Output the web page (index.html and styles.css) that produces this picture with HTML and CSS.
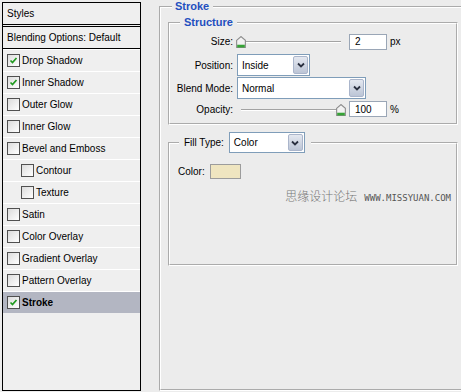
FILE: index.html
```html
<!DOCTYPE html>
<html lang="en">
<head>
  <meta charset="UTF-8">
  <title>Layer Style - Stroke</title>
  <link rel="stylesheet" href="styles.css">
</head>
<body>

  <div class="window">
    <div class="styles-panel">
      <div class="panel-head">Styles</div>
      <div class="panel-blend">Blending Options: Default</div>
      <div class="style-item"><span class="check on"><svg viewBox="0 0 11 11"><path d="M2.5 5.5 L4.5 7.5 L8.5 3" /></svg></span>Drop Shadow</div>
      <div class="style-item"><span class="check on"><svg viewBox="0 0 11 11"><path d="M2.5 5.5 L4.5 7.5 L8.5 3" /></svg></span>Inner Shadow</div>
      <div class="style-item"><span class="check"></span>Outer Glow</div>
      <div class="style-item"><span class="check"></span>Inner Glow</div>
      <div class="style-item"><span class="check"></span>Bevel and Emboss</div>
      <div class="style-item sub"><span class="check"></span>Contour</div>
      <div class="style-item sub"><span class="check"></span>Texture</div>
      <div class="style-item"><span class="check"></span>Satin</div>
      <div class="style-item"><span class="check"></span>Color Overlay</div>
      <div class="style-item"><span class="check"></span>Gradient Overlay</div>
      <div class="style-item"><span class="check"></span>Pattern Overlay</div>
      <div class="style-item selected"><span class="check on"><svg viewBox="0 0 11 11"><path d="M2.5 5.5 L4.5 7.5 L8.5 3" /></svg></span>Stroke</div>
    </div>

    <fieldset class="group outer">
      <legend>Stroke</legend>

      <fieldset class="group structure">
        <legend>Structure</legend>

        <div class="field size-row">
          <span class="field-label">Size:</span>
          <div class="slider">
            <svg class="thumb" style="left: 0.4%" viewBox="0 0 9 11"><path d="M0.5 4 L4.5 0.5 L8.5 4 V10.5 H0.5 Z" fill="#f2f2f2" stroke="#8c8c8c" /><rect x="1" y="8" width="7" height="2.5" fill="#36a336" /></svg>
          </div>
          <input class="num" value="2">
          <span class="unit">px</span>
        </div>

        <div class="field pos-row">
          <span class="field-label">Position:</span>
          <div class="select pos-select">
            <span class="select-value">Inside</span>
            <span class="select-btn"><svg viewBox="0 0 8 6"><path d="M1 1.5 L4 4.5 L7 1.5" /></svg></span>
          </div>
        </div>

        <div class="field blend-row">
          <span class="field-label">Blend Mode:</span>
          <div class="select blend-select">
            <span class="select-value">Normal</span>
            <span class="select-btn"><svg viewBox="0 0 8 6"><path d="M1 1.5 L4 4.5 L7 1.5" /></svg></span>
          </div>
        </div>

        <div class="field opacity-row">
          <span class="field-label">Opacity:</span>
          <div class="slider">
            <svg class="thumb" style="left: 100%" viewBox="0 0 9 11"><path d="M0.5 4 L4.5 0.5 L8.5 4 V10.5 H0.5 Z" fill="#f2f2f2" stroke="#8c8c8c" /><rect x="1" y="8" width="7" height="2.5" fill="#36a336" /></svg>
          </div>
          <input class="num" value="100">
          <span class="unit">%</span>
        </div>
      </fieldset>

      <fieldset class="group fill">
        <legend>
          <span>Fill Type:</span>
          <div class="select fill-select">
            <span class="select-value">Color</span>
            <span class="select-btn"><svg viewBox="0 0 8 6"><path d="M1 1.5 L4 4.5 L7 1.5" /></svg></span>
          </div>
        </legend>

        <div class="fill-body">
          <div class="color-row">
            <span>Color:</span>
            <span class="swatch"></span>
          </div>
          <div class="watermark">
            <span class="wm-cn">思缘设计论坛</span>
            <span class="wm-url">WWW.MISSYUAN.COM</span>
          </div>
        </div>
      </fieldset>
    </fieldset>
  </div>

</body>
</html>
```

FILE: styles.css
```css
* {
  box-sizing: border-box;
}

body {
  margin: 0;
  height: 392px;
  overflow: hidden;
  background: #ececec;
  font-family: "Liberation Sans", Arial, sans-serif;
  font-size: 10px;
  color: #000;
}

.window {
  display: flex;
  align-items: flex-start;
  padding-left: 2px;
}

/* Styles list */
.styles-panel {
  flex-shrink: 0;
  width: 139px;
  height: 389px;
  margin-top: 2px;
  border: 1px solid #000;
  background: #efefef;
}

.panel-head {
  display: flex;
  align-items: center;
  height: 24px;
  padding-left: 4px;
  border-bottom: 3px double #000;
}

.panel-blend {
  display: flex;
  align-items: center;
  height: 22px;
  padding-left: 4px;
  border-bottom: 1px solid #000;
}

.style-item {
  display: flex;
  align-items: center;
  gap: 2px;
  height: 22px;
  padding-left: 4px;
  border-top: 1px solid #fff;
}

.style-item.sub {
  padding-left: 18px;
}

.style-item.selected {
  background: #b3b6c2;
  font-weight: bold;
}

.check {
  display: flex;
  width: 13px;
  height: 13px;
  border: 1px solid #505050;
  background: linear-gradient(135deg, #dcdcdc, #fff);
}

.check svg {
  width: 11px;
  height: 11px;
  fill: none;
  stroke: #1f9a1f;
  stroke-width: 1.7;
}

/* Fieldsets */
.group {
  margin: 0;
  padding: 0;
  min-inline-size: 0;
  border: 2px groove #fff;
}

.group > legend {
  line-height: 13px;
  font-size: 11px;
  font-weight: bold;
  color: #1f4fbf;
}

.outer {
  flex-shrink: 0;
  width: 320px;
  height: 391px;
  margin-left: 18px;
}

.outer > legend {
  margin-left: 11px;
  padding: 0 4px 0 3px;
}

.structure {
  width: 290px;
  margin: 3px 0 0 7px;
  padding: 4px 0 6px;
}

.structure > legend {
  margin-left: 10px;
  padding: 0 4px;
}

.field {
  display: flex;
  align-items: center;
}

.field-label {
  width: 63px;
  margin-right: 4px;
  text-align: right;
}

.size-row {
  height: 17px;
}

.pos-row {
  height: 22px;
  margin-top: 4px;
}

.blend-row {
  height: 22px;
  margin-top: 1px;
}

.opacity-row {
  height: 16px;
  margin-top: 2px;
}

.slider {
  position: relative;
  width: 100px;
  height: 2px;
  margin: 1px 8px 0 4px;
  border-top: 1px solid #a3a3a3;
  border-bottom: 1px solid #fff;
}

.thumb {
  position: absolute;
  top: -6px;
  width: 10px;
  height: 12px;
  transform: translateX(-50%);
}

.num {
  width: 38px;
  height: 16px;
  margin: 0;
  padding: 0 0 0 5px;
  border: 1px solid #9aa6b6;
  background: #fff;
  font: inherit;
  color: #000;
}

.unit {
  margin-left: 3px;
}

.select {
  display: flex;
  height: 22px;
  border: 1px solid #7f9db9;
  background: #fff;
}

.select-value {
  flex: 1;
  display: flex;
  align-items: center;
  padding-left: 4px;
}

.select-btn {
  display: flex;
  align-items: center;
  justify-content: center;
  width: 15px;
  margin: 1px;
  border: 1px solid #aab5cb;
  border-radius: 2px;
  background: linear-gradient(#e4e8f0, #bcc5d6);
}

.select-btn svg {
  width: 8px;
  height: 6px;
  fill: none;
  stroke: #2a3040;
  stroke-width: 1.8;
}

.pos-select {
  width: 73px;
}

.blend-select {
  width: 129px;
}

/* Fill type */
.fill {
  width: 290px;
  margin: 7px 0 0 7px;
}

.fill > legend {
  display: flex;
  align-items: center;
  gap: 5px;
  margin-left: 9px;
  padding: 0 6px 0 5px;
  font-size: 10px;
  font-weight: normal;
  color: #000;
}

.fill-select {
  width: 76px;
  height: 21px;
}

.fill-body {
  height: 111px;
  padding: 11px 5px 0 8px;
}

.color-row {
  display: flex;
  align-items: center;
  gap: 5px;
}

.swatch {
  width: 31px;
  height: 15px;
  border: 1px solid #9c9c9c;
  background: #efe5c0;
}

.watermark {
  display: flex;
  align-items: baseline;
  justify-content: flex-end;
  gap: 7px;
  margin-top: 9px;
}

.wm-cn {
  font-family: "Noto Sans CJK SC", sans-serif;
  font-size: 12px;
  font-weight: 300;
  line-height: 16px;
  color: #777;
}

.wm-url {
  font-family: "DejaVu Sans Mono", monospace;
  font-size: 9px;
  color: #555;
}
```
